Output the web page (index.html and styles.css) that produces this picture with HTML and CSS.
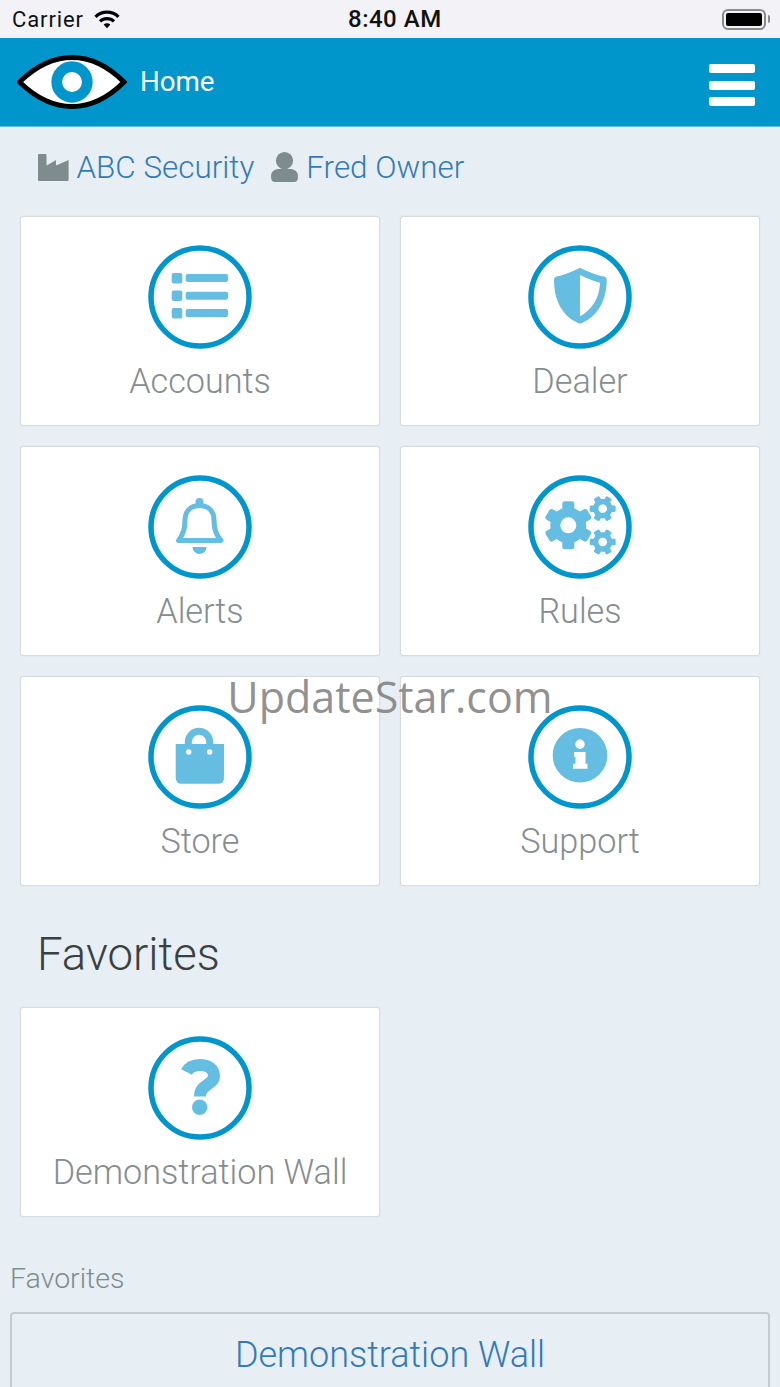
FILE: index.html
```html
<!DOCTYPE html>
<html lang="en">
<head>
<meta charset="utf-8">
<title>Home</title>
<link rel="stylesheet" href="styles.css">
</head>
<body>
<div class="statusbar">
  <div class="status-left">
    <span class="carrier">Carrier</span>
    <svg class="wifi" width="26" height="19" viewBox="0 0 26 19"><path class="wifi-arc" d="M1.500 6.800C8 .6 18 .6 24.500 6.800"/><path class="wifi-arc" d="M6 11.300c4-3.700 10-3.700 14 0"/><path class="wifi-tip" d="M9.600 14.600c2-1.700 4.800-1.700 6.800 0L13 18.200z"/></svg>
  </div>
  <span class="clock">8:40 AM</span>
  <div class="battery"><div class="battery-fill"></div></div>
</div>
<header class="topbar">
  <div class="brand">
    <svg class="eye" width="110" height="54" viewBox="0 0 110 54"><path class="eye-white" d="M2.500 27C20 10 38 2.500 55 2.500S90 10 107 27C90 44 72 51.500 55 51.500S20 44 2.500 27z"/><circle class="eye-iris" cx="55" cy="27" r="15.300"/></svg>
    <span class="brand-title">Home</span>
  </div>
  <div class="burger"><span></span><span></span><span></span></div>
</header>
<main class="content">
  <div class="context">
    <svg class="ctx-icon" width="31" height="27" viewBox="0 0 31 27"><path d="M0 1q0-1 1-1h6.500q1 0 1 1v10.500L18 6v5.500L30.600 6v20q0 1-1 1H1q-1 0-1-1z"/></svg>
    <a class="ctx-link">ABC Security</a>
    <svg class="ctx-icon ctx-person" width="27" height="30" viewBox="0 0 27 30"><circle cx="13.500" cy="8.600" r="8.600"/><path d="M0 24.500C0 19 4 17 8 17h11c4 0 8 2 8 7.500q0 5.500-4 5.500H4q-4 0-4-5.500z"/></svg>
    <a class="ctx-link">Fred Owner</a>
  </div>

  <div class="tiles">
    <div class="tile">
      <svg class="tile-icon" width="104" height="104" viewBox="0 0 104 104"><circle class="ring" cx="52" cy="52" r="49"/><g class="glyph"><rect x="23.700" y="28" width="10.600" height="10.600" rx="2"/><rect x="37.700" y="29" width="42.300" height="8" rx="2"/><rect x="23.700" y="45.500" width="10.600" height="10.600" rx="2"/><rect x="37.700" y="46.700" width="42.300" height="8" rx="2"/><rect x="23.700" y="63" width="10.600" height="10.600" rx="2"/><rect x="37.700" y="64" width="42.300" height="8" rx="2"/></g></svg>
      <span class="tile-label">Accounts</span>
    </div>
    <div class="tile">
      <svg class="tile-icon" width="104" height="104" viewBox="0 0 104 104"><circle class="ring" cx="52" cy="52" r="49"/><path class="glyph" fill-rule="evenodd" d="M52 22.700C46 26 36 30 28.500 31.500Q26 32 26 35C26 55 34 71 50 78Q52 79 54 78C70 71 78.700 55 78.700 35Q78.700 32 76 31.500C68 30 58 26 52 22.700zM52 30C58 33 65 36 72 37.700C71.500 52 65 64 52 71.300z"/></svg>
      <span class="tile-label">Dealer</span>
    </div>
    <div class="tile">
      <svg class="tile-icon" width="104" height="104" viewBox="0 0 104 104"><circle class="ring" cx="52" cy="52" r="49"/><path class="bell" d="M30.500 65.500Q35 60 36.500 52L37 45C37 35 44 30.500 51.500 30.500S66 35 66 45L66.500 52Q68 60 73 65.500z"/><circle class="glyph" cx="51.500" cy="27" r="4"/><path class="glyph" d="M44.500 72H58.500A7 7 0 0 1 44.500 72z"/></svg>
      <span class="tile-label">Alerts</span>
    </div>
    <div class="tile">
      <svg class="tile-icon" width="104" height="104" viewBox="0 0 104 104"><defs><g id="gear"><circle cx="0" cy="0" r="18"/><rect x="-6" y="-24" width="12" height="48" rx="2.500"/><rect x="-6" y="-24" width="12" height="48" rx="2.500" transform="rotate(60)"/><rect x="-6" y="-24" width="12" height="48" rx="2.500" transform="rotate(120)"/><circle class="gear-hole" cx="0" cy="0" r="8"/></g></defs><circle class="ring" cx="52" cy="52" r="49"/><g class="glyph"><use href="#gear" transform="translate(40.300 50.300)"/><use href="#gear" transform="translate(74.700 33.700) rotate(30) scale(.54)"/><use href="#gear" transform="translate(74.700 67) rotate(30) scale(.54)"/></g></svg>
      <span class="tile-label">Rules</span>
    </div>
    <div class="tile">
      <svg class="tile-icon" width="104" height="104" viewBox="0 0 104 104"><circle class="ring" cx="52" cy="52" r="49"/><path class="bag-handle" d="M40.300 42V37A10.700 10.700 0 0 1 61.700 37V42"/><path class="glyph" d="M27.700 39H76V72.700Q76 78.700 70 78.700H33.700Q27.700 78.700 27.700 72.700z"/><circle class="gear-hole" cx="40.700" cy="47" r="2.700"/><circle class="gear-hole" cx="61.700" cy="47" r="2.700"/></svg>
      <span class="tile-label">Store</span>
    </div>
    <div class="tile">
      <svg class="tile-icon" width="104" height="104" viewBox="0 0 104 104"><circle class="ring" cx="52" cy="52" r="49"/><circle class="glyph" cx="52" cy="50.300" r="27.300"/><circle class="gear-hole" cx="52" cy="39.300" r="4.700"/><path class="gear-hole" d="M46 47H57.500V58.700H59.500V63.700H45V58.700H47.500V52H46z"/></svg>
      <span class="tile-label">Support</span>
    </div>
  </div>

  <h2 class="section-title">Favorites</h2>
  <div class="tiles">
    <div class="tile">
      <svg class="tile-icon" width="104" height="104" viewBox="0 0 104 104"><circle class="ring" cx="52" cy="52" r="49"/><path class="qmark" d="M38.500 36C41 31 46 29 52 29C60 29 66 33 66 40C66 49 52 48 52 60.500"/><circle class="glyph" cx="51.700" cy="71.300" r="7.700"/></svg>
      <span class="tile-label">Demonstration Wall</span>
    </div>
  </div>

  <div class="fav-caption">Favorites</div>
  <div class="fav-box">Demonstration Wall</div>
</main>
<div class="watermark">UpdateStar.com</div>
</body>
</html>
```
FILE: styles.css
```css
* { box-sizing: border-box; }
html, body { margin: 0; height: 100%; overflow: hidden; }
body {
  position: relative;
  background: #e7eff5;
  font-family: Roboto, "Liberation Sans", sans-serif;
  font-weight: 300;
}
.statusbar {
  height: 38px;
  background: #f2f2f7;
  display: flex;
  align-items: center;
  justify-content: space-between;
  padding: 0 10px 0 12px;
  position: relative;
  color: #111;
  font-weight: 400;
}
.status-left { display: flex; align-items: center; gap: 10px; }
.carrier { font-size: 22px; letter-spacing: .9px; }
.wifi-arc { fill: none; stroke: #000; stroke-width: 3.200; }
.wifi-tip { fill: #000; }
.clock {
  position: absolute;
  left: 348px;
  font-size: 24px;
  letter-spacing: .5px;
  font-weight: 500;
}
.battery {
  width: 44px;
  height: 21px;
  border: 2px solid #8a8a8e;
  border-radius: 6px;
  padding: 2px;
  margin-right: 4px;
  position: relative;
}
.battery::after {
  content: "";
  position: absolute;
  right: -6px;
  top: 4px;
  width: 2px;
  height: 8px;
  background: #8a8a8e;
  border-radius: 0 2px 2px 0;
}
.battery-fill { height: 100%; background: #000; border-radius: 2px; }
.topbar {
  height: 89px;
  background: #0096cc;
  border-bottom: 1px solid #5cbfe3;
  display: flex;
  align-items: center;
  justify-content: space-between;
  padding: 0 25px 0 17px;
}
.brand { display: flex; align-items: center; gap: 13px; }
.brand-title { color: #fff; font-size: 27.700px; font-weight: 400; margin-bottom: 2px; }
.eye-white { fill: #fff; stroke: #000; stroke-width: 5; }
.eye-iris { fill: none; stroke: #0096cc; stroke-width: 10.700; }
.burger {
  display: flex;
  flex-direction: column;
  gap: 7.500px;
  margin-top: 6px;
}
.burger span {
  display: block;
  width: 46px;
  height: 9px;
  background: #fff;
  border-radius: 2px;
}
.content { padding: 0 10px; }
.context {
  display: flex;
  align-items: center;
  height: 80px;
  padding: 0 0 0 27.500px;
  margin-bottom: 9px;
}
.ctx-icon { fill: #7f8c8d; margin-right: 8px; flex: none; }
.ctx-person { margin-left: 17px; }
.ctx-link { color: #337ab7; font-size: 31.400px; }
.tiles {
  display: grid;
  grid-template-columns: 360px 360px;
  gap: 20px;
  padding: 0 10px;
}
.tile {
  height: 210px;
  background: #fff;
  border: 1px solid #d6dce0;
  border-radius: 3px;
  box-shadow: 0 0 1px rgba(0, 0, 0, .14);
  display: flex;
  flex-direction: column;
  align-items: center;
  padding-top: 27.700px;
}
.tile-icon { flex: none; }
.tile-label {
  margin-top: 12px;
  font-size: 34.200px;
  line-height: 40px;
  color: #858d90;
}
.ring { fill: none; stroke: #0096cc; stroke-width: 5.500; }
.glyph { fill: #65bde2; }
.gear-hole { fill: #fff; }
.bell { fill: none; stroke: #65bde2; stroke-width: 5; stroke-linejoin: round; }
.bag-handle { fill: none; stroke: #65bde2; stroke-width: 7; }
.qmark { fill: none; stroke: #65bde2; stroke-width: 12; }
.section-title {
  margin: 38px 0 0;
  padding-left: 27px;
  font-size: 45.500px;
  line-height: 62px;
  font-weight: 300;
  color: #3a3f41;
  height: 83px;
}
.fav-caption {
  margin-top: 44px;
  font-size: 28.500px;
  line-height: 36px;
  color: #7f8c8d;
}
.fav-box {
  margin-top: 15px;
  height: 84px;
  border: 2px solid #c5ccd0;
  border-radius: 4px;
  text-align: center;
  font-size: 36px;
  line-height: 82px;
  color: #337ab7;
}
.watermark {
  position: absolute;
  left: 0;
  right: 0;
  top: 668px;
  text-align: center;
  font-family: "Open Sans", sans-serif;
  font-weight: 400;
  font-size: 43px;
  line-height: 58px;
  color: rgba(115, 115, 115, .8);
}
```
